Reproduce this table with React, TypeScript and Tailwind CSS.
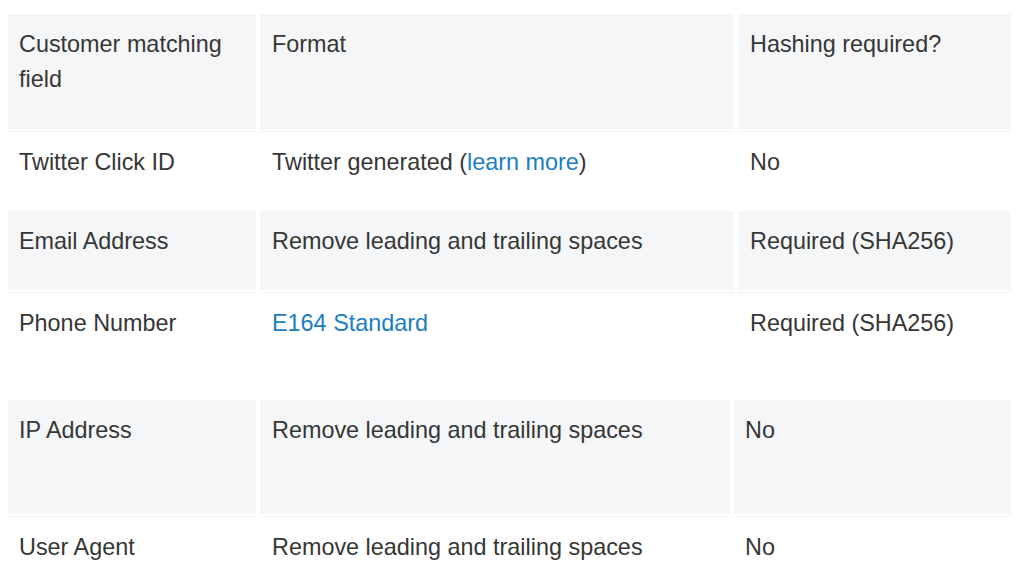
import React from "react";

const link = "text-[#1b7ec2]";

type RowProps = {
  gray?: boolean;
  h: string;
  line?: boolean;
  cols: string;
  cells: React.ReactNode[];
  pads: string[];
};

function Row({ gray, h, line, cols, cells, pads }: RowProps) {
  return (
    <>
      {line && (
        <div className={`grid ${cols} gap-x-[4px] pt-[2px]`}>
          {cells.map((_, i) => (
            <div key={i} className="h-px bg-[#eef0f2]" />
          ))}
        </div>
      )}
      <div className={`grid ${cols} gap-x-[4px] ${h}`}>
        {cells.map((c, i) => (
          <div
            key={i}
            className={`${gray ? "bg-[#f5f6f8]" : "bg-white"} ${pads[i]} pt-[13px] pr-2`}
          >
            {c}
          </div>
        ))}
      </div>
    </>
  );
}

export default function App() {
  const topCols = "grid-cols-[248px_474px_273px]";
  const botCols = "grid-cols-[248px_470px_277px]";
  const topPads = ["pl-[11px]", "pl-[12px]", "pl-[12px]"];
  const botPads = ["pl-[11px]", "pl-[12px]", "pl-[11px]"];
  return (
    <div
      className="w-[1024px] h-[584px] overflow-hidden bg-white pl-[8px] pt-[14px] text-[23.4px] leading-[34.5px] text-[#363636]"
      style={{ fontFamily: '"Liberation Sans", Arial, sans-serif' }}
    >
      <div className="w-[1003px]">
        <Row
          gray
          h="h-[115px]"
          cols={topCols}
          pads={topPads}
          cells={["Customer matching field", "Format", "Hashing required?"]}
        />
        <Row
          line
          h="h-[79px]"
          cols={topCols}
          pads={topPads}
          cells={[
            "Twitter Click ID",
            <span key="a">
              Twitter generated (<span className={link}>learn more</span>)
            </span>,
            "No",
          ]}
        />
        <Row
          gray
          h="h-[79px]"
          cols={topCols}
          pads={topPads}
          cells={["Email Address", "Remove leading and trailing spaces", "Required (SHA256)"]}
        />
        <Row
          line
          h="h-[107px]"
          cols={topCols}
          pads={topPads}
          cells={[
            "Phone Number",
            <span key="b" className={link}>
              E164 Standard
            </span>,
            "Required (SHA256)",
          ]}
        />
        <Row
          gray
          h="h-[114px]"
          cols={botCols}
          pads={botPads}
          cells={["IP Address", "Remove leading and trailing spaces", "No"]}
        />
        <Row
          line
          h="h-[80px]"
          cols={botCols}
          pads={botPads}
          cells={["User Agent", "Remove leading and trailing spaces", "No"]}
        />
      </div>
    </div>
  );
}
